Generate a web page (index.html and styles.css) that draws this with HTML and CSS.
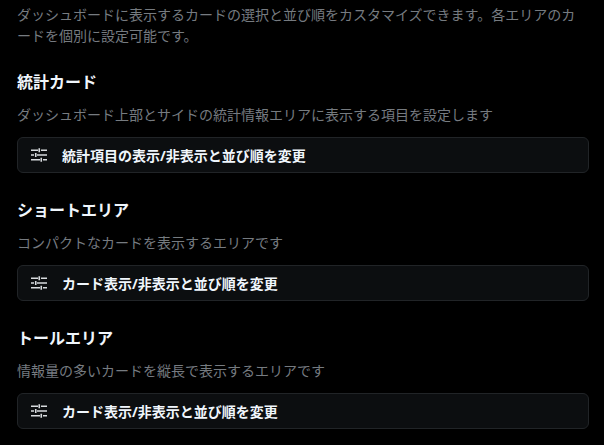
FILE: index.html
```html
<!DOCTYPE html>
<html lang="ja">
<head>
  <meta charset="UTF-8">
  <title>カード設定</title>
  <link rel="stylesheet" href="styles.css">
</head>
<body>
  <p class="intro">ダッシュボードに表示するカードの選択と並び順をカスタマイズできます。各エリアのカードを個別に設定可能です。</p>

  <section class="area">
    <h3>統計カード</h3>
    <p class="desc">ダッシュボード上部とサイドの統計情報エリアに表示する項目を設定します</p>
    <button class="btn" type="button">
      <svg class="icon" viewBox="0 0 16 16"><path d="M0 3.25h7M10 3.25h6M0 8h3M6 8h10M0 12.75h9M12 12.75h4M8.25 1.25v4M4.75 6v4M10.25 10.75v4"/></svg>
      <span>統計項目の表示/非表示と並び順を変更</span>
    </button>
  </section>

  <section class="area">
    <h3>ショートエリア</h3>
    <p class="desc">コンパクトなカードを表示するエリアです</p>
    <button class="btn" type="button">
      <svg class="icon" viewBox="0 0 16 16"><path d="M0 3.25h7M10 3.25h6M0 8h3M6 8h10M0 12.75h9M12 12.75h4M8.25 1.25v4M4.75 6v4M10.25 10.75v4"/></svg>
      <span>カード表示/非表示と並び順を変更</span>
    </button>
  </section>

  <section class="area">
    <h3>トールエリア</h3>
    <p class="desc">情報量の多いカードを縦長で表示するエリアです</p>
    <button class="btn" type="button">
      <svg class="icon" viewBox="0 0 16 16"><path d="M0 3.25h7M10 3.25h6M0 8h3M6 8h10M0 12.75h9M12 12.75h4M8.25 1.25v4M4.75 6v4M10.25 10.75v4"/></svg>
      <span>カード表示/非表示と並び順を変更</span>
    </button>
  </section>
</body>
</html>
```

FILE: styles.css
```css
html, body {
  height: 100%;
  overflow: hidden;
}

body {
  margin: 0;
  padding: 4px 15px 0 17px;
  background: #000;
  color: #f0f6fc;
  font-family: "Open Sans", "Noto Sans CJK JP", sans-serif;
  font-size: 14px;
  line-height: 21px;
}

.intro {
  margin: 0 0 24px;
  color: #767b80;
}

.area {
  margin-bottom: 25px;
}

.area h3 {
  margin: 0 0 10px;
  font-size: 16px;
  line-height: 24px;
  font-weight: 700;
}

.desc {
  margin: 0 0 12px;
  color: #767b80;
}

.btn {
  display: flex;
  align-items: center;
  gap: 15px;
  width: 100%;
  height: 36px;
  padding: 0 13px;
  background: #0c0e10;
  border: 1px solid #212427;
  border-radius: 6px;
  color: #f0f6fc;
  font: inherit;
  font-weight: 700;
  cursor: pointer;
}

.icon {
  width: 16px;
  height: 16px;
  fill: none;
  stroke: #d8dbde;
  stroke-width: 1.6;
}
```
